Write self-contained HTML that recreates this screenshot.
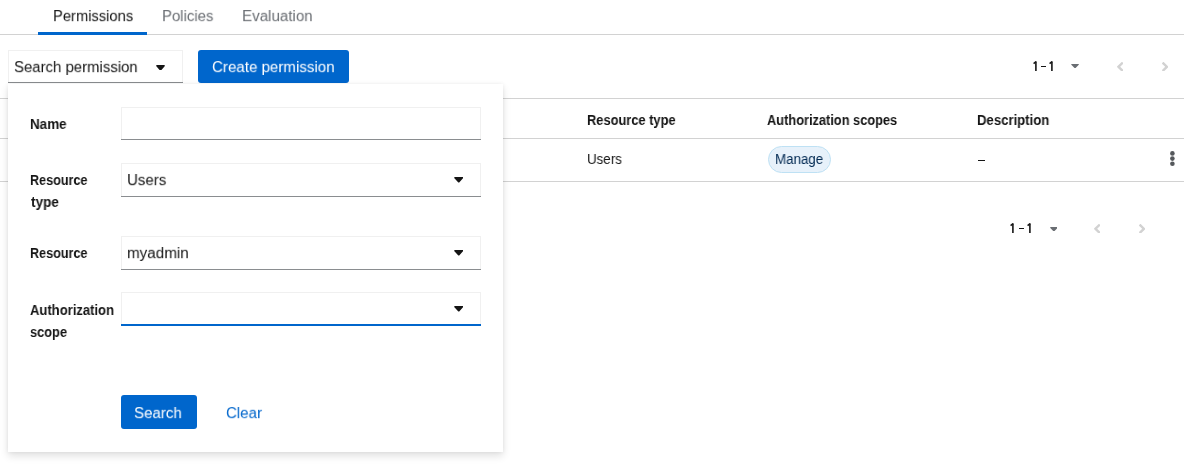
<!DOCTYPE html>
<html><head><meta charset="utf-8">
<style>
*{box-sizing:border-box;margin:0;padding:0}
html,body{width:1184px;height:464px;overflow:hidden;background:#fff;font-family:"Liberation Sans",sans-serif;position:relative}
.t{position:absolute;white-space:nowrap;line-height:1;transform-origin:0 0;will-change:transform}
.abs{position:absolute}
</style></head><body>
<!-- tabs -->
<div class="abs" style="left:0;top:34px;width:1184px;height:1px;background:#d2d2d2"></div>
<div class="abs" style="left:38px;top:32px;width:109px;height:3px;background:#0066cc"></div>
<!-- toolbar -->
<div class="abs" style="left:8px;top:50px;width:175px;height:33px;border:1px solid #f0f0f0"></div><div class="abs" style="left:8px;top:82px;width:175px;height:1px;background:#8a8d90"></div>
<svg class="abs" style="left:156px;top:64.5px" width="8.8" height="5.8" viewBox="5 192 302 168" preserveAspectRatio="none"><path d="M31.3 192h257.3c17.8 0 26.7 21.5 14.1 34.1L174.1 354.8c-7.8 7.8-20.5 7.8-28.3 0L17.2 226.1C4.6 213.5 13.5 192 31.3 192z" fill="#151515"/></svg>
<div class="abs" style="left:198px;top:50px;width:151px;height:33px;background:#0066cc;border-radius:3px"></div>
<!-- top pagination -->
<svg class="abs" style="left:1032.8px;top:60.8px" width="6" height="11" viewBox="0 0 6 11"><path d="M0.6 2.6 L2.6 1 L3.3 0.9" fill="none" stroke="#151515" stroke-width="1.5"/><path d="M2.9 0.4 L2.9 10.1" fill="none" stroke="#151515" stroke-width="1.6"/></svg>
<svg class="abs" style="left:1049.4px;top:60.8px" width="6" height="11" viewBox="0 0 6 11"><path d="M0.6 2.6 L2.6 1 L3.3 0.9" fill="none" stroke="#151515" stroke-width="1.5"/><path d="M2.9 0.4 L2.9 10.1" fill="none" stroke="#151515" stroke-width="1.6"/></svg>
<div class="abs" style="left:1041px;top:65.5px;width:5px;height:1.8px;background:#151515"></div>
<svg class="abs" style="left:1071.4px;top:63.9px" width="7.9" height="4.3" viewBox="5 192 302 168" preserveAspectRatio="none"><path d="M31.3 192h257.3c17.8 0 26.7 21.5 14.1 34.1L174.1 354.8c-7.8 7.8-20.5 7.8-28.3 0L17.2 226.1C4.6 213.5 13.5 192 31.3 192z" fill="#6a6e73"/></svg>
<svg class="abs" style="left:1117.1px;top:61.6px" width="6.4" height="9.6" viewBox="24.6 96 207 320" preserveAspectRatio="none"><path d="M31.7 239l136-136c9.4-9.4 24.6-9.4 33.9 0l22.6 22.6c9.4 9.4 9.4 24.6 0 33.9L127.9 256l96.4 96.4c9.4 9.4 9.4 24.6 0 33.9L201.7 409c-9.4 9.4-24.6 9.4-33.9 0l-136-136c-9.5-9.4-9.5-24.6-.1-34z" fill="#d2d2d2"/></svg>
<svg class="abs" style="left:1162.1px;top:61.6px" width="6.4" height="9.6" viewBox="24.6 96 207 320" preserveAspectRatio="none"><path d="M224.3 273l-136 136c-9.4 9.4-24.6 9.4-33.9 0l-22.6-22.6c-9.4-9.4-9.4-24.6 0-33.9l96.4-96.4-96.4-96.4c-9.4-9.4-9.4-24.6 0-33.9L54.3 103c9.4-9.4 24.6-9.4 33.9 0l136 136c9.5 9.4 9.5 24.6.1 34z" fill="#d2d2d2"/></svg>
<!-- table -->
<div class="abs" style="left:0;top:98px;width:1184px;height:1px;background:#d2d2d2"></div>
<div class="abs" style="left:0;top:138px;width:1184px;height:1px;background:#d2d2d2"></div>
<div class="abs" style="left:0;top:181px;width:1184px;height:1px;background:#d2d2d2"></div>
<div class="abs" style="left:768px;top:146px;width:63px;height:27px;border-radius:13.5px;background:#e7f1fa;border:1px solid #bee1f4"></div>
<div class="abs" style="left:978px;top:160px;width:7px;height:1px;background:#151515"></div>
<svg class="abs" style="left:1169px;top:150px" width="7" height="18" viewBox="0 0 7 18"><circle cx="3.4" cy="3.4" r="2.3" fill="#55585c"/><circle cx="3.4" cy="8.6" r="2.3" fill="#55585c"/><circle cx="3.4" cy="13.8" r="2.3" fill="#55585c"/></svg>
<!-- bottom pagination -->
<svg class="abs" style="left:1009.8px;top:222.8px" width="6" height="11" viewBox="0 0 6 11"><path d="M0.6 2.6 L2.6 1 L3.3 0.9" fill="none" stroke="#151515" stroke-width="1.5"/><path d="M2.9 0.4 L2.9 10.1" fill="none" stroke="#151515" stroke-width="1.6"/></svg>
<svg class="abs" style="left:1026.8px;top:222.8px" width="6" height="11" viewBox="0 0 6 11"><path d="M0.6 2.6 L2.6 1 L3.3 0.9" fill="none" stroke="#151515" stroke-width="1.5"/><path d="M2.9 0.4 L2.9 10.1" fill="none" stroke="#151515" stroke-width="1.6"/></svg>
<div class="abs" style="left:1018.8px;top:227.6px;width:5px;height:1.8px;background:#151515"></div>
<svg class="abs" style="left:1049.8px;top:226.9px" width="7.6" height="4.5" viewBox="5 192 302 168" preserveAspectRatio="none"><path d="M31.3 192h257.3c17.8 0 26.7 21.5 14.1 34.1L174.1 354.8c-7.8 7.8-20.5 7.8-28.3 0L17.2 226.1C4.6 213.5 13.5 192 31.3 192z" fill="#6a6e73"/></svg>
<svg class="abs" style="left:1094.0px;top:223.6px" width="6.4" height="9.6" viewBox="24.6 96 207 320" preserveAspectRatio="none"><path d="M31.7 239l136-136c9.4-9.4 24.6-9.4 33.9 0l22.6 22.6c9.4 9.4 9.4 24.6 0 33.9L127.9 256l96.4 96.4c9.4 9.4 9.4 24.6 0 33.9L201.7 409c-9.4 9.4-24.6 9.4-33.9 0l-136-136c-9.5-9.4-9.5-24.6-.1-34z" fill="#d2d2d2"/></svg>
<svg class="abs" style="left:1139.0px;top:223.6px" width="6.4" height="9.6" viewBox="24.6 96 207 320" preserveAspectRatio="none"><path d="M224.3 273l-136 136c-9.4 9.4-24.6 9.4-33.9 0l-22.6-22.6c-9.4-9.4-9.4-24.6 0-33.9l96.4-96.4-96.4-96.4c-9.4-9.4-9.4-24.6 0-33.9L54.3 103c9.4-9.4 24.6-9.4 33.9 0l136 136c9.5 9.4 9.5 24.6.1 34z" fill="#d2d2d2"/></svg>
<!-- panel -->
<div class="abs" style="left:8px;top:84px;width:495px;height:368px;background:#fff;box-shadow:0 4px 8px 0 rgba(3,3,3,.12),0 0 4px 0 rgba(3,3,3,.06)"></div>
<div class="abs" style="left:121px;top:107px;width:360px;height:33px;border:1px solid #f0f0f0"></div><div class="abs" style="left:121px;top:139px;width:360px;height:1px;background:#8a8d90"></div>
<div class="abs" style="left:121px;top:163px;width:360px;height:34px;border:1px solid #f0f0f0"></div><div class="abs" style="left:121px;top:196px;width:360px;height:1px;background:#8a8d90"></div>
<svg class="abs" style="left:453.8px;top:177.2px" width="9.3" height="5.6" viewBox="5 192 302 168" preserveAspectRatio="none"><path d="M31.3 192h257.3c17.8 0 26.7 21.5 14.1 34.1L174.1 354.8c-7.8 7.8-20.5 7.8-28.3 0L17.2 226.1C4.6 213.5 13.5 192 31.3 192z" fill="#151515"/></svg>
<div class="abs" style="left:121px;top:236px;width:360px;height:34px;border:1px solid #f0f0f0"></div><div class="abs" style="left:121px;top:269px;width:360px;height:1px;background:#8a8d90"></div>
<svg class="abs" style="left:453.8px;top:250.2px" width="9.3" height="5.6" viewBox="5 192 302 168" preserveAspectRatio="none"><path d="M31.3 192h257.3c17.8 0 26.7 21.5 14.1 34.1L174.1 354.8c-7.8 7.8-20.5 7.8-28.3 0L17.2 226.1C4.6 213.5 13.5 192 31.3 192z" fill="#151515"/></svg>
<div class="abs" style="left:121px;top:292px;width:360px;height:34px;border:1px solid #f0f0f0"></div><div class="abs" style="left:121px;top:324px;width:360px;height:2px;background:#0066cc"></div>
<svg class="abs" style="left:453.8px;top:306.2px" width="9.3" height="5.6" viewBox="5 192 302 168" preserveAspectRatio="none"><path d="M31.3 192h257.3c17.8 0 26.7 21.5 14.1 34.1L174.1 354.8c-7.8 7.8-20.5 7.8-28.3 0L17.2 226.1C4.6 213.5 13.5 192 31.3 192z" fill="#151515"/></svg>
<div class="abs" style="left:121px;top:395px;width:76px;height:34px;background:#0066cc;border-radius:3px"></div>
<div id="t_perm" class="t" style="left:52.66px;top:8.71px;font-size:16px;font-weight:400;color:#151515;transform:scale(0.9198,0.9375)">Permissions<span class="bl" style="display:inline-block;width:0;height:0;vertical-align:baseline"></span></div>
<div id="t_pol" class="t" style="left:161.96px;top:8.71px;font-size:16px;font-weight:400;color:#6a6e73;transform:scale(0.9307,0.9375)">Policies<span class="bl" style="display:inline-block;width:0;height:0;vertical-align:baseline"></span></div>
<div id="t_eval" class="t" style="left:242.21px;top:8.72px;font-size:16px;font-weight:400;color:#6a6e73;transform:scale(0.9461,0.9375)">Evaluation<span class="bl" style="display:inline-block;width:0;height:0;vertical-align:baseline"></span></div>
<div id="t_sp" class="t" style="left:14.21px;top:59.52px;font-size:16px;font-weight:400;color:#151515;transform:scale(0.9332,0.9375)">Search permission<span class="bl" style="display:inline-block;width:0;height:0;vertical-align:baseline"></span></div>
<div id="t_cp" class="t" style="left:211.65px;top:59.82px;font-size:16px;font-weight:400;color:#ffffff;transform:scale(0.9439,0.9375)">Create permission<span class="bl" style="display:inline-block;width:0;height:0;vertical-align:baseline"></span></div>
<div id="t_hrt" class="t" style="left:587.35px;top:112.90px;font-size:14px;font-weight:700;color:#151515;transform:scale(0.9178,1)">Resource type<span class="bl" style="display:inline-block;width:0;height:0;vertical-align:baseline"></span></div>
<div id="t_has" class="t" style="left:767.32px;top:112.91px;font-size:14px;font-weight:700;color:#151515;transform:scale(0.9142,1)">Authorization scopes<span class="bl" style="display:inline-block;width:0;height:0;vertical-align:baseline"></span></div>
<div id="t_hd" class="t" style="left:976.53px;top:112.90px;font-size:14px;font-weight:700;color:#151515;transform:scale(0.9381,1)">Description<span class="bl" style="display:inline-block;width:0;height:0;vertical-align:baseline"></span></div>
<div id="t_ru" class="t" style="left:586.90px;top:151.70px;font-size:14px;font-weight:400;color:#151515;transform:scale(0.9542,1)">Users<span class="bl" style="display:inline-block;width:0;height:0;vertical-align:baseline"></span></div>
<div id="t_man" class="t" style="left:774.80px;top:151.72px;font-size:14px;font-weight:400;color:#002952;transform:scale(0.9517,1)">Manage<span class="bl" style="display:inline-block;width:0;height:0;vertical-align:baseline"></span></div>
<div id="t_name" class="t" style="left:30.31px;top:116.91px;font-size:14px;font-weight:700;color:#151515;transform:scale(0.9592,1)">Name<span class="bl" style="display:inline-block;width:0;height:0;vertical-align:baseline"></span></div>
<div id="t_res1" class="t" style="left:29.70px;top:173.00px;font-size:14px;font-weight:700;color:#151515;transform:scale(0.9001,1)">Resource<span class="bl" style="display:inline-block;width:0;height:0;vertical-align:baseline"></span></div>
<div id="t_type" class="t" style="left:30.74px;top:195.00px;font-size:14px;font-weight:700;color:#151515;transform:scale(0.9676,1)">type<span class="bl" style="display:inline-block;width:0;height:0;vertical-align:baseline"></span></div>
<div id="t_users" class="t" style="left:127.32px;top:172.71px;font-size:16px;font-weight:400;color:#151515;transform:scale(0.9405,0.9375)">Users<span class="bl" style="display:inline-block;width:0;height:0;vertical-align:baseline"></span></div>
<div id="t_res2" class="t" style="left:29.70px;top:245.71px;font-size:14px;font-weight:700;color:#151515;transform:scale(0.9001,1)">Resource<span class="bl" style="display:inline-block;width:0;height:0;vertical-align:baseline"></span></div>
<div id="t_myad" class="t" style="left:127.33px;top:245.81px;font-size:16px;font-weight:400;color:#151515;transform:scale(0.9506,0.9375)">myadmin<span class="bl" style="display:inline-block;width:0;height:0;vertical-align:baseline"></span></div>
<div id="t_auth" class="t" style="left:30.29px;top:302.91px;font-size:14px;font-weight:700;color:#151515;transform:scale(0.9308,1)">Authorization<span class="bl" style="display:inline-block;width:0;height:0;vertical-align:baseline"></span></div>
<div id="t_scope" class="t" style="left:29.89px;top:324.81px;font-size:14px;font-weight:700;color:#151515;transform:scale(0.9150,1)">scope<span class="bl" style="display:inline-block;width:0;height:0;vertical-align:baseline"></span></div>
<div id="t_search" class="t" style="left:134.20px;top:405.63px;font-size:16px;font-weight:400;color:#ffffff;transform:scale(0.9437,0.9375)">Search<span class="bl" style="display:inline-block;width:0;height:0;vertical-align:baseline"></span></div>
<div id="t_clear" class="t" style="left:226.43px;top:405.61px;font-size:16px;font-weight:400;color:#0066cc;transform:scale(0.9405,0.9375)">Clear<span class="bl" style="display:inline-block;width:0;height:0;vertical-align:baseline"></span></div>
</body></html>
